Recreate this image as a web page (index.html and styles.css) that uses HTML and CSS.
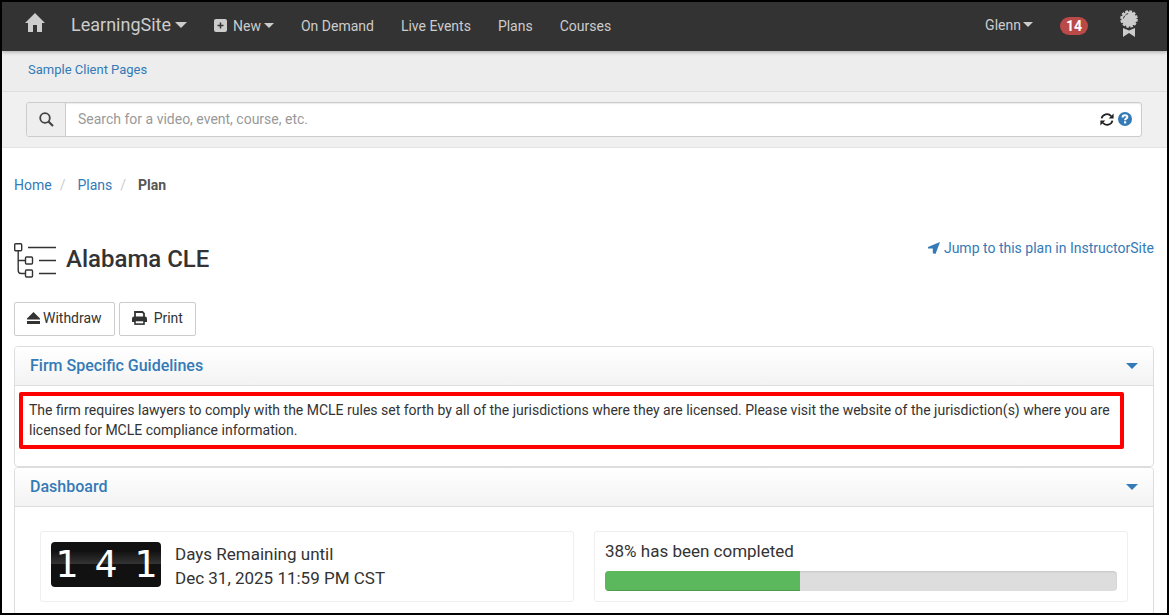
FILE: index.html
```
<!DOCTYPE html>
<html lang="en">
<head>
    <meta charset="UTF-8">
    <meta name="viewport" content="width=device-width, initial-scale=1.0">
    <title>Alabama CLE - LearningSite</title>
    <link rel="stylesheet" href="styles.css">
</head>
<body>
    <nav class="navbar">
        <a href="#" class="nav-home" aria-label="Home">
            <svg width="20" height="19" viewBox="0 0 20 19"><path fill="currentColor" d="M10 0L20 10H17V19H12V12H8V19H3V10H0Z"/></svg>
        </a>
        <button type="button" class="nav-item brand">LearningSite <span class="caret"></span></button>
        <button type="button" class="nav-item nav-new">
            <svg width="13" height="13" viewBox="0 0 13 13"><rect width="13" height="13" rx="2" fill="currentColor"/><path d="M6.5 3.5v6M3.5 6.5h6" stroke="#333" stroke-width="1.5"/></svg>
            <span>New</span> <span class="caret small"></span>
        </button>
        <a href="#" class="nav-item">On Demand</a>
        <a href="#" class="nav-item">Live Events</a>
        <a href="#" class="nav-item">Plans</a>
        <a href="#" class="nav-item">Courses</a>
        <div class="nav-right">
            <button type="button" class="nav-item user">Glenn <span class="caret small"></span></button>
            <a href="#" class="badge">14</a>
            <a href="#" class="award" aria-label="Credits">
                <svg width="18" height="28" viewBox="0 0 18 28">
                    <circle cx="9" cy="9" r="7.6" fill="currentColor"/>
                    <circle cx="9" cy="9" r="7.8" fill="none" stroke="currentColor" stroke-width="2" stroke-dasharray="2.6 1.5"/>
                    <path d="M3.5 8.5A6 6 0 0 1 9 3.5" fill="none" stroke="#333" stroke-width="1" stroke-dasharray="3 1"/>
                    <path fill="currentColor" d="M3 18L9 20.5L15 18V27L9 23L3 27Z"/>
                </svg>
            </a>
        </div>
    </nav>

    <div class="client-pages">
        <a href="#">Sample Client Pages</a>
    </div>

    <form class="search-bar">
        <div class="search-group">
            <button type="button" class="search-button" aria-label="Search">
                <svg width="15" height="15" viewBox="0 0 15 15" fill="none" stroke="#444"><circle cx="6" cy="6" r="4.8" stroke-width="1.8"/><path d="M9.5 9.5L14 14" stroke-width="2.2"/></svg>
            </button>
            <input type="text" class="search-input" aria-label="Search" placeholder="Search for a video, event, course, etc.">
            <button type="button" class="icon-button" aria-label="Refresh">
                <svg width="14" height="13" viewBox="0 0 14 13"><path d="M1.6 5.4A5.4 5.1 0 0 1 11.2 3.2M12.4 7.6A5.4 5.1 0 0 1 2.8 9.8" fill="none" stroke="#222" stroke-width="1.8"/><path fill="#222" d="M13.6 0.5V5.4H8.7ZM0.4 12.5V7.6H5.3Z"/></svg>
            </button>
            <button type="button" class="icon-button" aria-label="Help">
                <svg width="14" height="14" viewBox="0 0 13 13"><circle cx="6.5" cy="6.5" r="6.5" fill="#337ab7"/><path d="M4.3 5C4.3 2.3 8.7 2.3 8.7 4.7C8.7 6 6.6 6 6.6 7.7" fill="none" stroke="#fff" stroke-width="1.9"/><path fill="#fff" d="M5.6 8.6h2v2h-2z"/></svg>
            </button>
        </div>
    </form>

    <main class="content">
        <ol class="breadcrumb">
            <li><a href="#">Home</a></li>
            <li><a href="#">Plans</a></li>
            <li class="active">Plan</li>
        </ol>

        <header class="plan-header">
            <svg class="plan-icon" width="42" height="35" viewBox="0 0 42 35" fill="none" stroke="#333" stroke-width="1.4">
                <rect x="0.7" y="0.7" width="7" height="7" rx="1"/>
                <rect x="11.5" y="14" width="7" height="7" rx="1"/>
                <rect x="11.5" y="27" width="7" height="7" rx="1"/>
                <path d="M4.2 8V27.5Q4.2 30.5 7.2 30.5H11.5M4.2 17.5H11.5M14 4.5H42M25 17.5H42M25 30.5H42"/>
            </svg>
            <h1>Alabama CLE</h1>
            <a href="#" class="jump-link">
                <svg width="12" height="12" viewBox="0 0 12 12"><path fill="currentColor" d="M12 0L7.5 12L4.8 11.2V6.6H0V5Z"/></svg>
                Jump to this plan in InstructorSite
            </a>
        </header>

        <div class="actions">
            <button type="button" class="btn">
                <svg width="13" height="12" viewBox="0 0 13 12"><path fill="currentColor" d="M6.5 0L13 6.5V7.5H0V6.5ZM0 9H13V12H0Z"/></svg>
                Withdraw
            </button>
            <button type="button" class="btn btn-print">
                <svg width="15" height="14" viewBox="0 0 15 14"><path d="M3 6V1H10.5L12 2.5V6" fill="none" stroke="currentColor" stroke-width="1.8"/><path fill="currentColor" d="M2 5.5H13Q15 5.5 15 7.5V11H0V7.5Q0 5.5 2 5.5Z"/><rect x="3" y="9.5" width="9" height="3.6" fill="#fff" stroke="currentColor" stroke-width="1.6"/></svg>
                Print
            </button>
        </div>

        <section class="panel">
            <h2><button type="button" class="panel-heading">Firm Specific Guidelines <span class="caret"></span></button></h2>
            <div class="guidelines">
                <p class="highlight">The firm requires lawyers to comply with the MCLE rules set forth by all of the jurisdictions where they are licensed. Please visit the website of the jurisdiction(s) where you are licensed for MCLE compliance information.</p>
            </div>
        </section>

        <section class="panel">
            <h2><button type="button" class="panel-heading">Dashboard <span class="caret"></span></button></h2>
            <div class="dashboard">
                <div class="card remaining">
                    <div class="counter"><span>1</span><span>4</span><span>1</span></div>
                    <div>Days Remaining until<br>Dec 31, 2025 11:59 PM CST</div>
                </div>
                <div class="card">
                    <div id="progress-label" class="progress-label">38% has been completed</div>
                    <div class="progress" role="progressbar" aria-labelledby="progress-label" aria-valuenow="38" aria-valuemin="0" aria-valuemax="100">
                        <div class="progress-bar" style="width: 38%"></div>
                    </div>
                </div>
            </div>
        </section>
    </main>
</body>
</html>
```
FILE: styles.css
```
* {
    box-sizing: border-box;
}
body {
    margin: 0;
    height: 100vh;
    border: 2px solid #000;
    overflow: hidden;
    background: #fff;
    color: #333;
    font-family: Roboto, Arial, sans-serif;
    font-size: 14px;
    line-height: 20px;
}
a {
    color: #337ab7;
    text-decoration: none;
}
button {
    margin: 0;
    padding: 0;
    border: 0;
    background: none;
    color: inherit;
    font: inherit;
    cursor: pointer;
}
svg {
    display: block;
    flex: none;
}
.caret {
    display: inline-block;
    flex: none;
    border-top: 6px solid currentColor;
    border-left: 6px solid transparent;
    border-right: 6px solid transparent;
}
.caret.small {
    border-width: 5px 5px 0;
}

/* Navigation */
.navbar {
    position: relative;
    display: flex;
    align-items: center;
    height: 49px;
    padding: 0 29px 2px 23px;
    background: #333;
    color: #ccc;
    box-shadow: 0 1px 4px rgba(0, 0, 0, 0.3);
}
.navbar a {
    color: #ccc;
}
.nav-home {
    margin-right: 26px;
    padding-bottom: 6px;
}
.nav-item {
    display: flex;
    align-items: center;
    gap: 4px;
    margin-right: 27px;
    white-space: nowrap;
}
.brand {
    padding-bottom: 2px;
    font-size: 18px;
}
.nav-new {
    gap: 0;
}
.nav-new svg {
    margin-right: 6px;
}
.nav-new .caret {
    margin-left: 3px;
}
.nav-right {
    display: flex;
    align-items: center;
    margin-left: auto;
}
.user {
    gap: 2px;
    padding-bottom: 2px;
}
.navbar .badge {
    padding: 0 6px;
    border-radius: 10px;
    background: #b94a48;
    color: #fff;
    font-size: 14px;
    font-weight: 700;
    line-height: 18px;
}
.award {
    margin-left: 32px;
    padding-bottom: 3px;
}

/* Search */
.client-pages {
    height: 41px;
    padding: 9px 26px;
    border-bottom: 1px solid #ddd;
    background: #ededed;
    font-size: 13px;
}
.search-bar {
    padding: 10px 25px 10px 24px;
    border-bottom: 1px solid #e3e3e3;
    background: #f0f0f0;
}
.search-group {
    display: flex;
    align-items: center;
    height: 35px;
    padding: 0 9px 1px 0;
    border: 1px solid #ccc;
    border-radius: 3px;
    background: #fff;
    box-shadow: inset 0 1px 1px rgba(0, 0, 0, 0.08);
}
.search-button {
    display: flex;
    align-items: center;
    justify-content: center;
    height: 33px;
    margin-bottom: -1px;
    width: 39px;
    border-right: 1px solid #ccc;
    border-radius: 3px 0 0 3px;
    background: #eee;
}
.search-input {
    flex: 1;
    min-width: 0;
    padding: 0 12px;
    border: 0;
    outline: 0;
    background: none;
    color: #555;
    font: inherit;
}
.search-input::placeholder {
    color: #999;
}
.icon-button {
    margin-left: 4px;
}

/* Plan */
.content {
    padding: 27px 13px 0 12px;
}
.breadcrumb {
    display: flex;
    margin: 0;
    padding: 0;
    list-style: none;
}
.breadcrumb li + li::before {
    content: "/";
    padding: 0 12px 0 8px;
    color: #ccc;
}
.breadcrumb .active {
    color: #555;
    font-weight: 700;
}
.breadcrumb .active::before {
    font-weight: 400;
}
.plan-header {
    display: flex;
    align-items: center;
    margin-top: 43px;
}
.plan-icon {
    margin: 3px 10px 0 0;
}
.plan-header h1 {
    margin: 0;
    font-size: 24px;
    font-weight: 500;
    line-height: 42px;
}
.jump-link {
    display: flex;
    align-items: center;
    align-self: flex-start;
    gap: 4px;
    margin-left: auto;
}
.actions {
    display: flex;
    gap: 4px;
    margin: 22px 0 10px;
}
.btn {
    display: flex;
    align-items: center;
    gap: 3px;
    padding: 5px 12px 7px;
    border: 1px solid #ccc;
    border-radius: 2px;
    background: #fff;
}
.btn-print {
    gap: 7px;
}

/* Panels */
.panel {
    border: 1px solid #ddd;
    border-radius: 4px;
}
.panel h2 {
    margin: 0;
    font-size: 16px;
    font-weight: 500;
}
.panel-heading {
    display: flex;
    align-items: center;
    justify-content: space-between;
    width: 100%;
    padding: 9px 15px;
    border-bottom: 1px solid #ddd;
    border-radius: 3px 3px 0 0;
    background: linear-gradient(#fff, #f3f3f3);
    color: #337ab7;
}
.guidelines {
    padding: 6px 29px 17px 4px;
}
.highlight {
    margin: 0;
    padding: 4px 6px 5px;
    border: 4px solid #f00;
    border-radius: 2px;
}
.dashboard {
    display: grid;
    grid-template-columns: 1fr 1fr;
    gap: 20px;
    padding: 24px 25px;
    font-size: 17px;
    line-height: 24px;
}
.card {
    padding: 10px;
    border: 1px solid #eee;
    border-radius: 3px;
}
.remaining {
    display: flex;
    align-items: flex-start;
    gap: 14px;
}
.counter {
    display: flex;
    flex: none;
    justify-content: space-between;
    width: 110px;
    height: 45px;
    padding: 0 4px;
    border-radius: 4px;
    background: linear-gradient(#111 20%, #333 48%, #111 49%);
    color: #fff;
    font-family: "DejaVu Sans Mono", monospace;
    font-size: 38px;
    line-height: 44px;
}
.progress-label {
    line-height: 18px;
}
.progress {
    height: 20px;
    margin-top: 11px;
    border-radius: 4px;
    background: #ddd;
    box-shadow: inset 0 1px 2px rgba(0, 0, 0, 0.1);
    overflow: hidden;
}
.progress-bar {
    height: 100%;
    background: #5cb85c;
    box-shadow: inset 0 -1px 0 rgba(0, 0, 0, 0.15);
}
```
